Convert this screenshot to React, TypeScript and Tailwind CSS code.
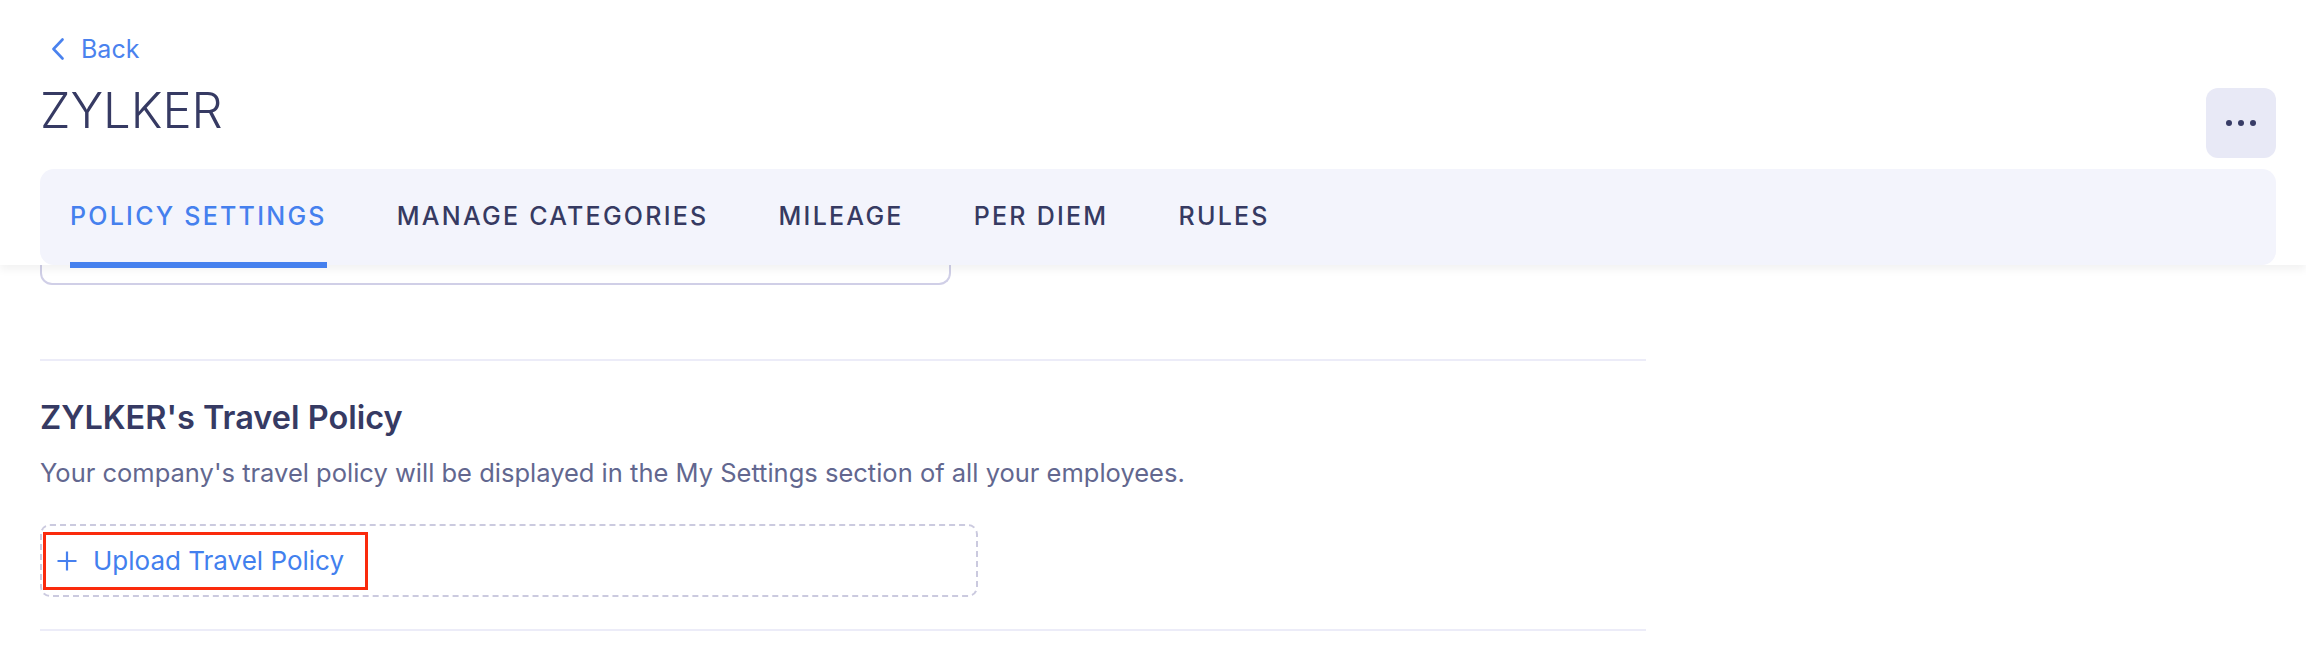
import { useState } from "react";

const tabs = ["POLICY SETTINGS", "MANAGE CATEGORIES", "MILEAGE", "PER DIEM", "RULES"];

function ChevronLeft() {
  return (
    <svg width="12" height="22" viewBox="0 0 12 22" fill="none">
      <polyline
        points="10.5,1.5 1.5,11 10.5,20.5"
        stroke="#4a82ee"
        strokeWidth="2.6"
        strokeLinecap="round"
        strokeLinejoin="round"
      />
    </svg>
  );
}

function Plus() {
  return (
    <svg width="20" height="20" viewBox="0 0 20 20" fill="none">
      <path d="M10 0.5V19.5M0.5 10H19.5" stroke="#4680ef" strokeWidth="2.2" />
    </svg>
  );
}

export default function App() {
  const [active, setActive] = useState(0);

  return (
    <div className="w-full h-[666px] overflow-hidden bg-white font-['Inter',sans-serif]">
      {/* sticky header */}
      <header className="relative z-10 bg-white pl-[40px] pr-[30px] pt-[34px] shadow-[0_5px_8px_rgba(0,0,0,0.05)]">
        <a className="inline-flex items-center gap-[17px] pl-[12px] text-[25px] leading-[30px] text-[#4a82ee] cursor-pointer">
          <ChevronLeft />
          <span>Back</span>
        </a>

        <div className="mt-[14px] flex items-start justify-between">
          <h1 className="text-[49px] leading-[62px] font-light text-[#363a63]">ZYLKER</h1>
          <button className="mt-[8px] flex h-[70px] w-[70px] items-center justify-center gap-[6px] rounded-[12px] bg-[#e8e9f6]">
            <span className="h-[6px] w-[6px] rounded-full bg-[#383c66]" />
            <span className="h-[6px] w-[6px] rounded-full bg-[#383c66]" />
            <span className="h-[6px] w-[6px] rounded-full bg-[#383c66]" />
          </button>
        </div>

        <nav className="mt-[11px] flex h-[96px] items-stretch gap-[70px] rounded-[14px] bg-[#f3f4fc] pl-[30px]">
          {tabs.map((tab, i) => (
            <button
              key={tab}
              onClick={() => setActive(i)}
              className={
                "relative flex items-center text-[25px] font-medium tracking-[0.09em] " +
                (i === active ? "text-[#4580ee]" : "text-[#363a62]")
              }
            >
              {tab}
              {i === active && (
                <span className="absolute -bottom-[3px] left-0 right-0 h-[6px] bg-[#4580ee]" />
              )}
            </button>
          ))}
        </nav>
      </header>

      <main className="pl-[40px]">
        {/* bottom of the card scrolled under the header */}
        <div className="h-[20px] w-[911px] rounded-b-[12px] border-2 border-t-0 border-[#d0cfe7]" />

        <div className="mt-[74px] h-[2px] w-[1606px] bg-[#ececf8]" />

        <h2 className="mt-[38px] text-[32.5px] leading-[38px] font-semibold text-[#363a63]">
          ZYLKER's Travel Policy
        </h2>
        <p className="mt-[21px] text-[25.5px] leading-[30px] text-[#62678f]">
          Your company's travel policy will be displayed in the My Settings section of all your employees.
        </p>

        <div className="mt-[36px] flex h-[73px] w-[938px] items-center rounded-[10px] border-2 border-dashed border-[#cbcadf] pl-[1px]">
          <div className="flex h-[58px] w-[325px] items-center gap-[16px] border-[3px] border-[#fa2a0c] pl-[11px]">
            <Plus />
            <span className="text-[26px] leading-[30px] text-[#4280ee]">Upload Travel Policy</span>
          </div>
        </div>

        <div className="mt-[32px] h-[2px] w-[1606px] bg-[#ececf8]" />
      </main>
    </div>
  );
}
